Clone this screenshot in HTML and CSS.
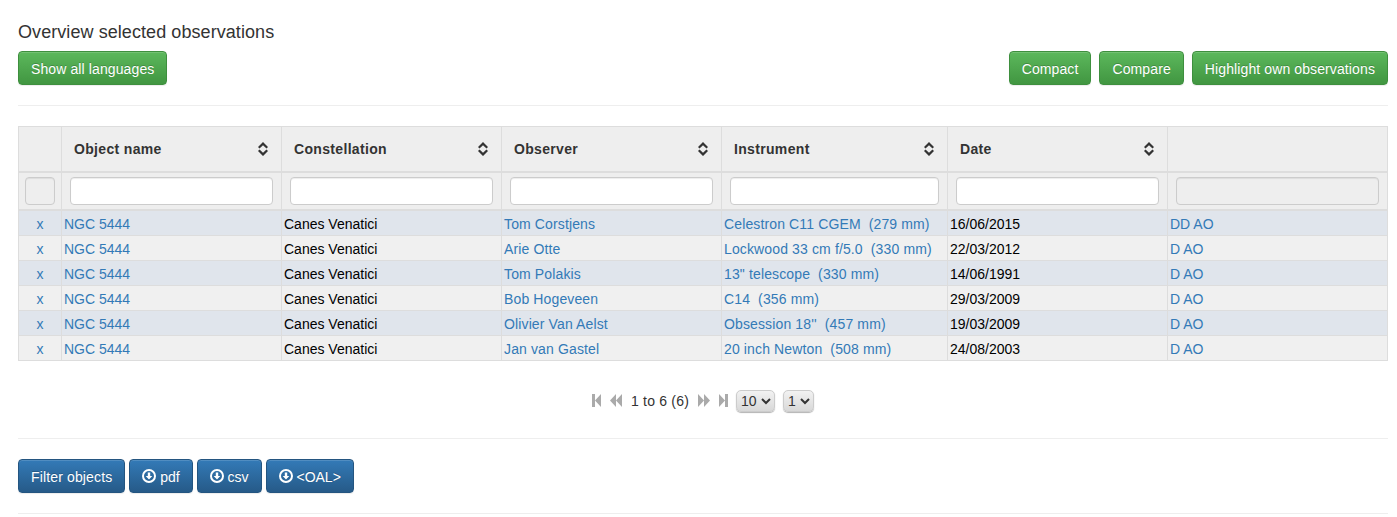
FILE: index.html
```html
<!DOCTYPE html>
<html>
  <head>
    <title>Overview selected observations</title>
    <link rel="stylesheet" href="styles.css">
  </head>
  <body>
    <h4 class="page-title">Overview selected observations</h4>
    <div class="top-bar">
      <button class="btn btn-green">Show all languages</button>
      <div class="top-right">
        <button class="btn btn-green">Compact</button>
        <button class="btn btn-green">Compare</button>
        <button class="btn btn-green">Highlight own observations</button>
      </div>
    </div>
    <hr class="rule rule-top">
    <table class="obs">
      <colgroup>
        <col class="c-x"><col class="c-w"><col class="c-w"><col class="c-w"><col class="c-i"><col class="c-w"><col>
      </colgroup>
      <thead>
        <tr class="heads">
          <th></th>
          <th><div class="th-in"><span>Object name</span><svg class="sort" viewBox="0 0 10 14"><path d="M5 0L10 5 8.500 6.400 5 3.200 1.500 6.400 0 5zM5 14L0 9 1.500 7.600 5 10.800 8.500 7.600 10 9z"/></svg></div></th>
          <th><div class="th-in"><span>Constellation</span><svg class="sort" viewBox="0 0 10 14"><path d="M5 0L10 5 8.500 6.400 5 3.200 1.500 6.400 0 5zM5 14L0 9 1.500 7.600 5 10.800 8.500 7.600 10 9z"/></svg></div></th>
          <th><div class="th-in"><span>Observer</span><svg class="sort" viewBox="0 0 10 14"><path d="M5 0L10 5 8.500 6.400 5 3.200 1.500 6.400 0 5zM5 14L0 9 1.500 7.600 5 10.800 8.500 7.600 10 9z"/></svg></div></th>
          <th><div class="th-in"><span>Instrument</span><svg class="sort" viewBox="0 0 10 14"><path d="M5 0L10 5 8.500 6.400 5 3.200 1.500 6.400 0 5zM5 14L0 9 1.500 7.600 5 10.800 8.500 7.600 10 9z"/></svg></div></th>
          <th><div class="th-in"><span>Date</span><svg class="sort" viewBox="0 0 10 14"><path d="M5 0L10 5 8.500 6.400 5 3.200 1.500 6.400 0 5zM5 14L0 9 1.500 7.600 5 10.800 8.500 7.600 10 9z"/></svg></div></th>
          <th></th>
        </tr>
        <tr class="filters">
          <th><input class="filter" disabled></th>
          <th><input class="filter"></th>
          <th><input class="filter"></th>
          <th><input class="filter"></th>
          <th><input class="filter"></th>
          <th><input class="filter"></th>
          <th><input class="filter" disabled></th>
        </tr>
      </thead>
      <tbody>
        <tr><td class="rm"><a href="#">x</a></td><td><a href="#">NGC 5444</a></td><td>Canes Venatici</td><td class="wide"><a href="#">Tom Corstjens</a></td><td class="wide"><a href="#">Celestron C11 CGEM&nbsp; (279 mm)</a></td><td>16/06/2015</td><td><a href="#">DD AO</a></td></tr>
        <tr><td class="rm"><a href="#">x</a></td><td><a href="#">NGC 5444</a></td><td>Canes Venatici</td><td class="wide"><a href="#">Arie Otte</a></td><td class="wide"><a href="#">Lockwood 33 cm f/5.0&nbsp; (330 mm)</a></td><td>22/03/2012</td><td><a href="#">D AO</a></td></tr>
        <tr><td class="rm"><a href="#">x</a></td><td><a href="#">NGC 5444</a></td><td>Canes Venatici</td><td class="wide"><a href="#">Tom Polakis</a></td><td class="wide"><a href="#">13" telescope&nbsp; (330 mm)</a></td><td>14/06/1991</td><td><a href="#">D AO</a></td></tr>
        <tr><td class="rm"><a href="#">x</a></td><td><a href="#">NGC 5444</a></td><td>Canes Venatici</td><td class="wide"><a href="#">Bob Hogeveen</a></td><td class="wide"><a href="#">C14&nbsp; (356 mm)</a></td><td>29/03/2009</td><td><a href="#">D AO</a></td></tr>
        <tr><td class="rm"><a href="#">x</a></td><td><a href="#">NGC 5444</a></td><td>Canes Venatici</td><td class="wide"><a href="#">Olivier Van Aelst</a></td><td class="wide"><a href="#">Obsession 18''&nbsp; (457 mm)</a></td><td>19/03/2009</td><td><a href="#">D AO</a></td></tr>
        <tr><td class="rm"><a href="#">x</a></td><td><a href="#">NGC 5444</a></td><td>Canes Venatici</td><td class="wide"><a href="#">Jan van Gastel</a></td><td class="wide"><a href="#">20 inch Newton&nbsp; (508 mm)</a></td><td>24/08/2003</td><td><a href="#">D AO</a></td></tr>
      </tbody>
    </table>
    <div class="pager">
      <svg class="pg pg-end" viewBox="0 0 9 13"><path d="M0 0h3v13H0zM9 0v13L3 6.500z"/></svg>
      <svg class="pg pg-step" viewBox="0 0 12 13"><path d="M6 0v13L0 6.500zM12 0v13L6 6.500z"/></svg>
      <span class="pg-text">1 to 6 (6)</span>
      <svg class="pg pg-step" viewBox="0 0 12 13"><path d="M0 0v13l6-6.500zM6 0v13l6-6.500z"/></svg>
      <svg class="pg pg-end" viewBox="0 0 9 13"><path d="M0 0v13l6-6.500zM6 0h3v13H6z"/></svg>
      <select class="pg-select sel-10"><option>10</option></select>
      <select class="pg-select sel-1"><option>1</option></select>
    </div>
    <hr class="rule rule-mid">
    <div class="bottom-bar">
      <button class="btn btn-blue btn-wide">Filter objects</button>
      <button class="btn btn-blue"><svg class="dl" viewBox="0 0 14 14"><path fill-rule="evenodd" d="M7 0a7 7 0 1 0 0 14A7 7 0 0 0 7 0zm0 2a5 5 0 1 1 0 10A5 5 0 0 1 7 2zM5.800 3.500h2.400V7H10.300L7 10.500 3.700 7h2.100z"/></svg> pdf</button>
      <button class="btn btn-blue"><svg class="dl" viewBox="0 0 14 14"><path fill-rule="evenodd" d="M7 0a7 7 0 1 0 0 14A7 7 0 0 0 7 0zm0 2a5 5 0 1 1 0 10A5 5 0 0 1 7 2zM5.800 3.500h2.400V7H10.300L7 10.500 3.700 7h2.100z"/></svg> csv</button>
      <button class="btn btn-blue"><svg class="dl" viewBox="0 0 14 14"><path fill-rule="evenodd" d="M7 0a7 7 0 1 0 0 14A7 7 0 0 0 7 0zm0 2a5 5 0 1 1 0 10A5 5 0 0 1 7 2zM5.800 3.500h2.400V7H10.300L7 10.500 3.700 7h2.100z"/></svg> &lt;OAL&gt;</button>
    </div>
    <hr class="rule rule-end">
  </body>
</html>
```

FILE: styles.css
```css
html, body {margin: 0; padding: 0;}
body {
  background: #fff;
  color: #333;
  font: 14px/20px "Liberation Sans", Arial, sans-serif;
  padding: 0 9px 0 18px;
  height: 517px;
  box-sizing: border-box;
  overflow: hidden;
}
a {color: #337ab7; text-decoration: none;}

.page-title {
  font-size: 18px;
  font-weight: 500;
  line-height: 20px;
  letter-spacing: .07px;
  margin: 0;
  padding: 22px 0 9px;
}

.top-bar {display: flex; justify-content: space-between;}
.top-right {display: flex; gap: 8px;}

.btn {
  font: 14px/20px "Liberation Sans", Arial, sans-serif;
  color: #fff;
  height: 34px;
  padding: 7px 12px 5px;
  border: 1px solid;
  border-radius: 4px;
  box-sizing: border-box;
  white-space: nowrap;
  text-shadow: 0 -1px 0 rgba(0,0,0,.2);
  box-shadow: inset 0 1px 0 rgba(255,255,255,.15), 0 1px 1px rgba(0,0,0,.075);
}
.btn-green {
  background: linear-gradient(#5cb85c, #419641);
  border-color: #3e8f3e;
  letter-spacing: .11px;
}
.btn-blue {
  background: linear-gradient(#337ab7, #265a88);
  border-color: #245580;
}
.btn-wide {letter-spacing: .14px;}
.dl {width: 14px; height: 14px; fill: #fff; vertical-align: -1px;}

.rule {border: 0; border-top: 1px solid #eee; margin: 0;}
.rule-top {margin-top: 20px;}
.rule-mid {margin-top: 26px;}
.rule-end {margin-top: 20px;}
.bottom-bar {display: flex; gap: 4px; margin-top: 20px;}

.obs {
  table-layout: fixed;
  width: 1370px;
  border-collapse: collapse;
  margin-top: 20px;
  font-size: 14px;
}
.c-x {width: 43px;}
.c-w {width: 220px;}
.c-i {width: 226px;}

.obs th {
  background: #eee;
  border: 1px solid #ddd;
  color: #333;
  padding: 0;
  text-align: left;
}
.heads th {height: 44px; border-bottom-width: 2px;}
.th-in {
  display: flex;
  justify-content: space-between;
  align-items: center;
  padding: 0 13px 0 12px;
  font-weight: bold;
  letter-spacing: .33px;
}
.sort {width: 10px; height: 14px; fill: #333;}

.filters th {height: 36px; border-bottom-width: 2px; padding: 0 8px;}
.filters th:first-child {padding: 0 6px;}
.filter {
  display: block;
  width: 100%;
  height: 28px;
  box-sizing: border-box;
  border: 1px solid #ccc;
  border-radius: 4px;
  background: #fff;
  box-shadow: inset 0 1px 1px rgba(0,0,0,.075);
  padding: 0 6px;
}
.filter:disabled {background: #eee;}

.obs td {
  height: 25px;
  box-sizing: border-box;
  border: 1px solid #ddd;
  padding: 2px 2px 0;
  color: #000;
  white-space: nowrap;
  overflow: hidden;
}
.obs tbody tr:nth-child(odd) td {background: #e0e5ec;}
.obs tbody tr:nth-child(even) td {background: #f0f0f0;}
.obs td.rm {text-align: center;}
.obs td.wide {letter-spacing: .13px;}

.pager {
  display: flex;
  justify-content: center;
  align-items: center;
  gap: 9px;
  margin-top: 29px;
  height: 22px;
  color: #333;
}
.pg {height: 13px; fill: #aaa;}
.pg-end {width: 9px;}
.pg-step {width: 12px;}
.pg-text {letter-spacing: .2px;}
.pg-select {
  height: 22px;
  border: 1px solid #ccc;
  border-radius: 5px;
  background: linear-gradient(#f2f2f2, #d8d8d8);
  font: 14px "Liberation Sans", Arial, sans-serif;
  color: #333;
  box-shadow: 0 1px 1px rgba(0,0,0,.3);
}
.sel-10 {width: 39px; margin-left: -1px;}
.sel-1 {width: 31px; margin-left: -1px;}
```
